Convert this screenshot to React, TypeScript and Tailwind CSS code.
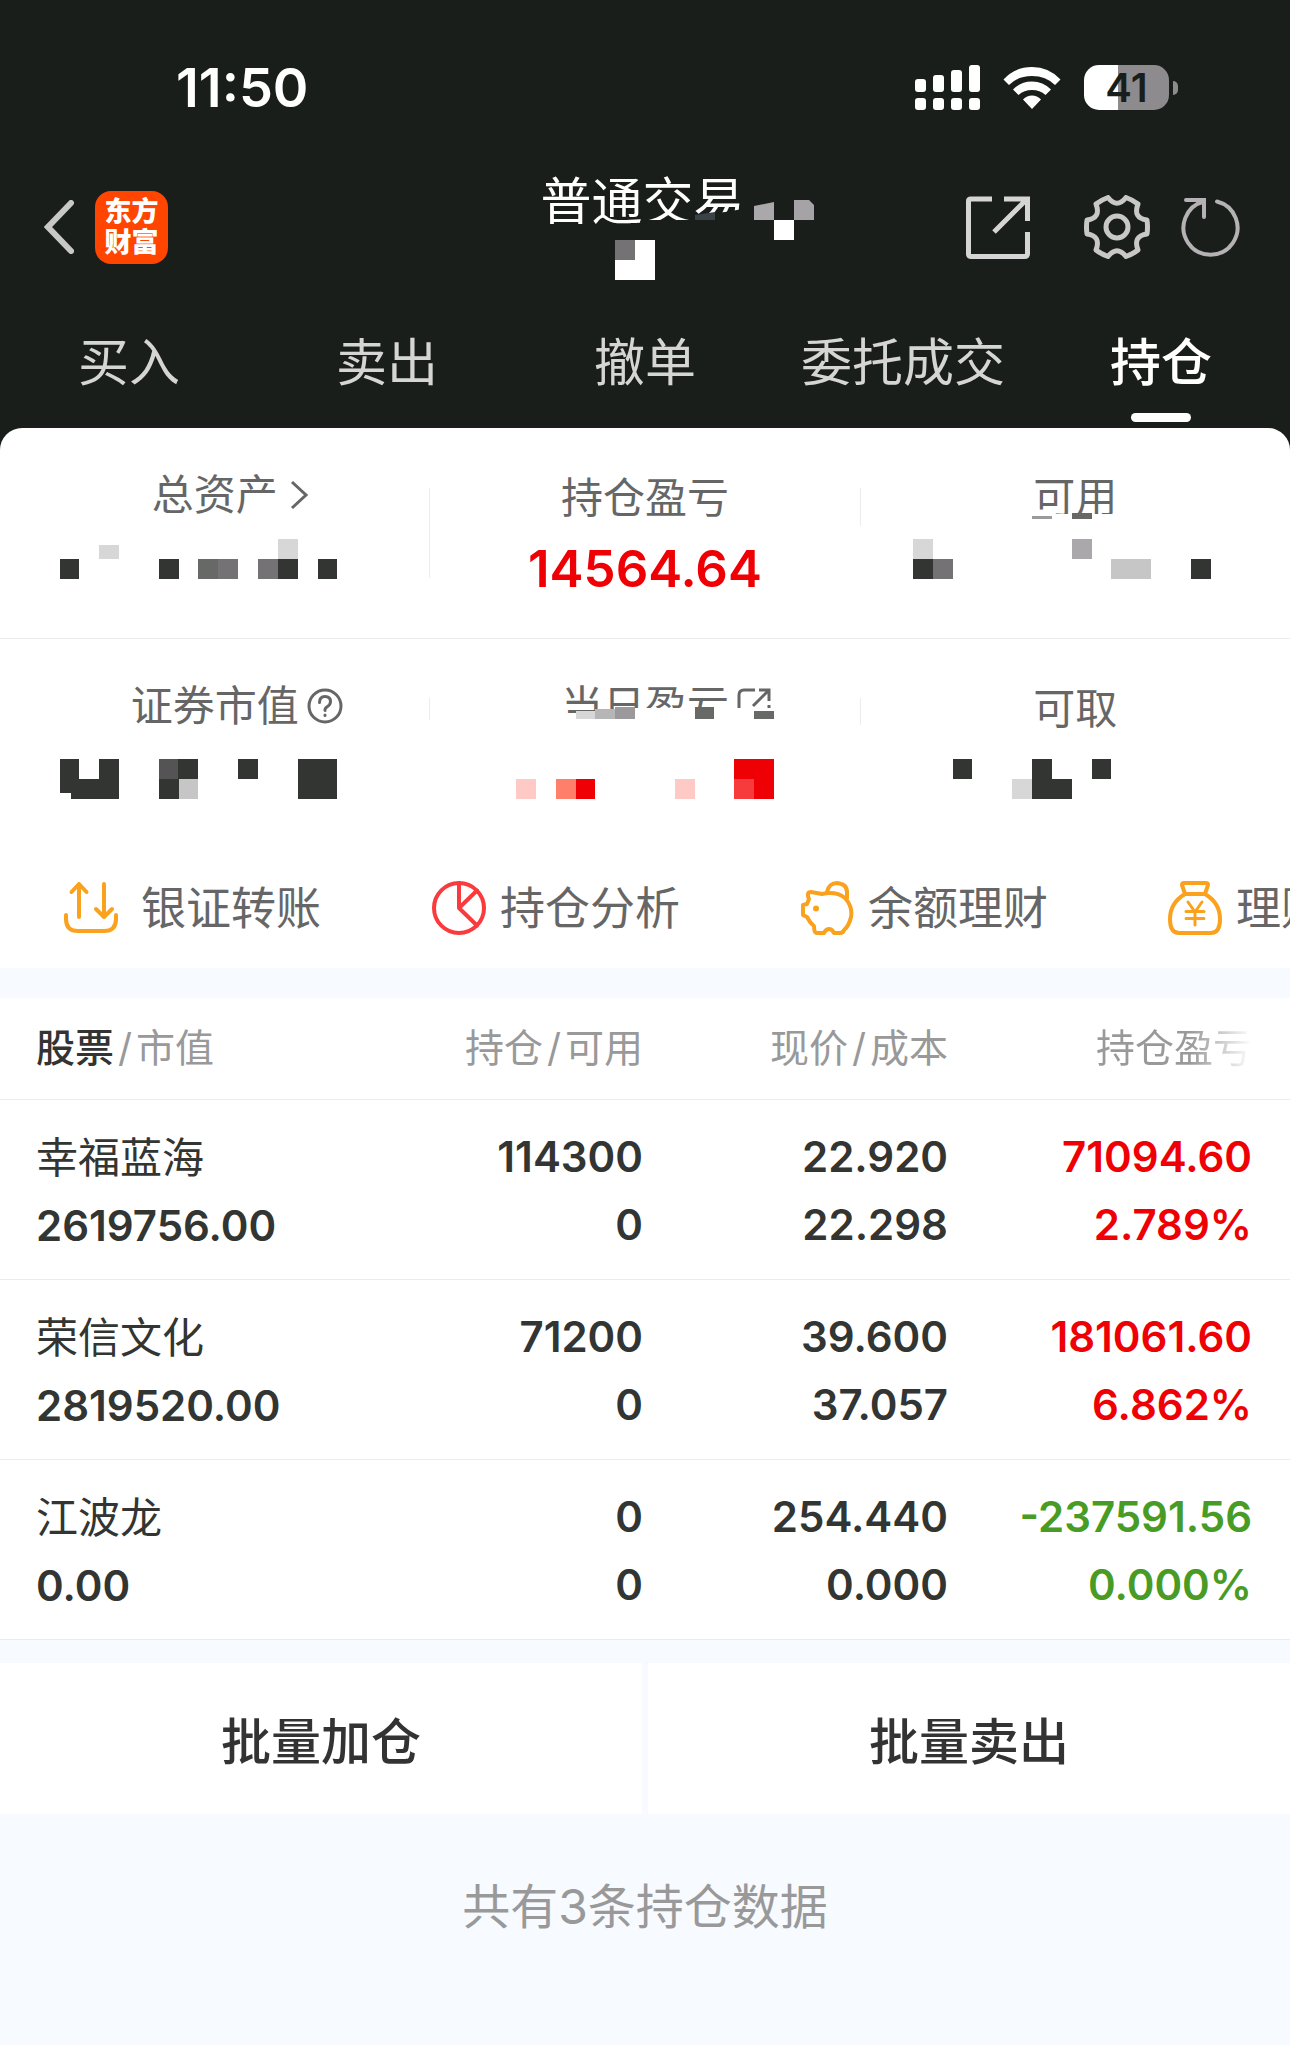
import React from "react";
import clsx from "clsx";

type Block = [x: number, y: number, w: number, h: number, color: string];

const DARK = "#323532";
const MID = "#666966";
const GREY = "#757276";
const LIGHT = "#d7d7d7";
const RED = "#ee0005";

const tabs = ["买入", "卖出", "撤单", "委托成交", "持仓"];

const holdings = [
  {
    name: "幸福蓝海",
    value: "2619756.00",
    amount: "114300",
    available: "0",
    price: "22.920",
    cost: "22.298",
    profit: "71094.60",
    rate: "2.789%",
    up: true,
  },
  {
    name: "荣信文化",
    value: "2819520.00",
    amount: "71200",
    available: "0",
    price: "39.600",
    cost: "37.057",
    profit: "181061.60",
    rate: "6.862%",
    up: true,
  },
  {
    name: "江波龙",
    value: "0.00",
    amount: "0",
    available: "0",
    price: "254.440",
    cost: "0.000",
    profit: "-237591.56",
    rate: "0.000%",
    up: false,
  },
];

// Pixel blocks that hide private values
const Mosaic = ({
  blocks,
  cover,
}: {
  blocks: Block[];
  cover?: string;
}) => (
  <svg
    aria-hidden="true"
    width="430"
    height="200"
    viewBox="0 0 430 200"
    shapeRendering="crispEdges"
    className="absolute top-0 left-1/2 -translate-x-1/2"
  >
    {cover && <polygon points={cover} fill="#fff" />}
    {blocks.map(([x, y, w, h, color], i) => (
      <rect key={i} x={x} y={y} width={w} height={h} fill={color} />
    ))}
  </svg>
);

const Stat = ({
  label,
  value,
  icon,
  blocks,
  cover,
}: {
  label: string;
  value?: string;
  icon?: React.ReactNode;
  blocks?: Block[];
  cover?: string;
}) => (
  <div className="relative flex flex-1 flex-col items-center">
    <div
      className={clsx(
        "relative text-[42px] leading-[60px] text-[#666]",
        icon ? "pt-[37px]" : "pt-10"
      )}
    >
      {label}
      {icon}
    </div>
    {value && (
      <div className="mt-2 text-[51px] leading-[66px] font-semibold text-[#ee0005]">
        {value}
      </div>
    )}
    {blocks && <Mosaic blocks={blocks} cover={cover} />}
  </div>
);

const StatusBar = () => (
  <div className="flex h-[175px] items-center justify-between pr-[112px] pl-[176px]">
    <span className="text-[54px] leading-none font-semibold text-white">
      11:50
    </span>
    <div className="flex items-center gap-[23px]">
      <svg width="65" height="46" viewBox="0 0 65 46" fill="#fff">
        <rect x="0" y="14" width="11" height="13" rx="3" />
        <rect x="18" y="10" width="11" height="17" rx="3" />
        <rect x="36" y="5" width="11" height="22" rx="3" />
        <rect x="54" y="0" width="11" height="27" rx="3" />
        <rect x="0" y="33" width="11" height="12" rx="3" />
        <rect x="18" y="33" width="11" height="12" rx="3" />
        <rect x="36" y="33" width="11" height="12" rx="3" />
        <rect x="54" y="33" width="11" height="12" rx="3" />
      </svg>
      <svg width="58" height="43" viewBox="0 0 58 43" fill="#fff">
        <path d="M0.500 13.500Q12 1 29 1t28.500 12.500L52 19Q43 10 29 10T6 19Z" />
        <path d="M10 23.500Q18 15.500 29 15.500t19 8L42.500 29Q37 24 29 24t-13.500 5Z" />
        <path d="M29 43 20 33.500Q24 29.500 29 29.500t9 4Z" />
      </svg>
      <div className="flex items-center gap-1">
        <div className="flex h-[45px] w-[85px] items-center justify-center rounded-[15px] bg-linear-to-r from-white from-40% to-[#8e8b8e] to-40% text-[40px] font-semibold text-[#1a1e1b]">
          41
        </div>
        <span className="h-[14px] w-[5px] rounded-r-full bg-[#8e8b8e]" />
      </div>
    </div>
  </div>
);

const NavBar = () => (
  <div className="flex h-[104px] items-center pr-[49px] pl-[44px]">
    <div className="flex flex-1 items-center gap-[21px]">
      <button aria-label="返回">
        <svg width="30" height="54" viewBox="0 0 30 54" fill="none">
          <path
            d="M27 3 4 27l23 24"
            stroke="#c8c8c8"
            strokeWidth="6"
            strokeLinecap="round"
          />
        </svg>
      </button>
      <a
        href="#home"
        className="flex h-[73px] w-[73px] flex-col items-center justify-center rounded-[16px] bg-[#ff4500] text-[27px] leading-[31px] font-black text-white"
      >
        <span>东方</span>
        <span>财富</span>
      </a>
    </div>
    <h1 className="relative self-start text-[51px] leading-[54px] text-white">
      普通交易
      <svg
        aria-hidden="true"
        width="290"
        height="110"
        viewBox="-2 0 290 110"
        className="absolute top-0 left-0"
      >
        <path d="M100 45h52v-5l30-3 24-4v27H100Z" fill="#1a1e1b" />
        <path d="M152 40l20-3v8h-20Z" fill="#3a4245" />
        <path d="M211 31l20-4v18h-20Z" fill="#aaa8ab" />
        <path d="M251 25h15l5 5v15h-20Z" fill="#a5a3a6" />
        <path d="M231 45h20v20h-20ZM72 65h40v40H72Z" fill="#fff" />
        <path d="M72 65h20v20H72Z" fill="#757276" />
      </svg>
    </h1>
    <div className="flex flex-1 items-center justify-end">
      <button aria-label="分享" className="mr-[54px]">
        <svg
          width="64"
          height="63"
          viewBox="0 0 64 63"
          fill="none"
          stroke="#d5d5d5"
          strokeWidth="5"
        >
          <path d="M26 3H5Q2.500 3 2.500 5v53q0 2.500 3 2.500h53q3 0 3-3V36M38 3h23.500v22M61 3 28 36" />
        </svg>
      </button>
      <button aria-label="设置" className="mr-[31px]">
        <svg
          width="66"
          height="64"
          viewBox="0 0 66 64"
          fill="none"
          stroke="#c8c8c8"
          strokeWidth="5"
          strokeLinejoin="round"
        >
          <path d="M63 25Q64 32 63 39Q48.600 41 54 55Q49 59 42 61.500Q33 50 24 61.500Q17 59 12 55Q17.400 41 3 39Q2 32 3 25Q17.400 23 12 9Q17 5 24 2.500Q33 14 42 2.500Q49 5 54 9Q48.600 23 63 25Z" />
          <circle cx="33" cy="32" r="11" />
        </svg>
      </button>
      <button aria-label="刷新">
        <svg
          width="60"
          height="60"
          viewBox="0 0 60 60"
          fill="none"
          stroke="#b4b2b4"
          strokeWidth="4"
          strokeLinecap="round"
        >
          <path d="M36 4.500a27 27 0 1 1-13 0M5 3h18v17" />
        </svg>
      </button>
    </div>
  </div>
);

const Tabs = () => (
  <nav className="grid grid-cols-5">
    {tabs.map((tab) => {
      const active = tab === "持仓";
      return (
        <button
          key={tab}
          className={clsx(
            "flex h-[149px] flex-col items-center pt-[54px] text-[51px] leading-[60px]",
            active ? "font-medium text-white" : "text-[#d5d5d5]"
          )}
        >
          {tab}
          {active && (
            <span className="mt-5 h-[9px] w-[60px] rounded-full bg-white" />
          )}
        </button>
      );
    })}
  </nav>
);

const Summary = () => (
  <section>
    <div className="flex h-[211px] border-b border-[#ececec]">
      <Stat
        label="总资产"
        icon={
          <svg
            width="20"
            height="30"
            viewBox="0 0 20 30"
            fill="none"
            stroke="#666"
            strokeWidth="3"
            className="absolute top-[52px] left-full ml-3"
          >
            <path d="m2 2 14 13L2 28" />
          </svg>
        }
        blocks={[
          [60, 131, 19, 20, DARK],
          [99, 117, 20, 14, LIGHT],
          [159, 131, 20, 20, DARK],
          [198, 131, 20, 20, MID],
          [218, 131, 20, 20, GREY],
          [258, 131, 20, 20, GREY],
          [278, 111, 20, 20, LIGHT],
          [278, 131, 20, 20, DARK],
          [318, 131, 19, 20, DARK],
        ]}
      />
      <span className="mt-[60px] h-[90px] w-px bg-[#ececec]" />
      <Stat label="持仓盈亏" value="14564.64" />
      <span className="mt-[60px] h-[38px] w-px bg-[#ececec]" />
      <Stat
        label="可用"
        cover="160,86 260,86 260,106 160,106"
        blocks={[
          [172, 88, 20, 3, "#9c9a9c"],
          [212, 85, 20, 6, MID],
          [53, 111, 20, 20, LIGHT],
          [53, 131, 20, 20, DARK],
          [73, 131, 20, 20, GREY],
          [212, 111, 20, 20, "#aaa8ab"],
          [251, 131, 40, 20, "#c6c6c6"],
          [331, 131, 20, 20, DARK],
        ]}
      />
    </div>
    <div className="flex h-[209px]">
      <Stat
        label="证券市值"
        icon={
          <svg
            width="36"
            height="36"
            viewBox="0 0 36 36"
            fill="none"
            stroke="#666"
            strokeWidth="3"
            strokeLinecap="round"
            className="absolute top-[49px] left-full ml-2"
          >
            <circle cx="18" cy="18" r="16" />
            <path d="M12.500 14.500q0-6 5.500-6t5.500 5q0 3-3 5t-2.500 4M18 27v.5" />
          </svg>
        }
        blocks={[
          [60, 120, 19, 34, DARK],
          [71, 140, 28, 20, DARK],
          [99, 120, 20, 40, DARK],
          [159, 120, 20, 20, "#545454"],
          [178, 120, 20, 20, DARK],
          [159, 140, 20, 20, DARK],
          [179, 140, 19, 20, "#c6c6c6"],
          [238, 120, 20, 20, DARK],
          [298, 120, 39, 40, DARK],
        ]}
      />
      <span className="mt-[59px] h-[22px] w-px bg-[#ececec]" />
      <Stat
        label="当日盈亏"
        icon={
          <svg
            width="34"
            height="34"
            viewBox="0 0 34 34"
            fill="none"
            stroke="#666"
            strokeWidth="3"
            className="absolute top-[49px] left-full ml-2"
          >
            <path d="M18 2H7Q2 2 2 7v25h30V17M22 2h10v11M32 2 16 18" />
          </svg>
        }
        cover="120,74 155,74 205,69 350,69 350,100 120,100"
        blocks={[
          [146, 72, 20, 8, LIGHT],
          [165, 70, 20, 10, "#b6b6b6"],
          [185, 68, 20, 12, "#9c999c"],
          [265, 68, 19, 12, MID],
          [324, 72, 20, 8, MID],
          [86, 140, 20, 20, "#ffc9c6"],
          [126, 140, 20, 20, "#ff7f6b"],
          [146, 140, 19, 20, RED],
          [245, 140, 20, 20, "#ffc9c6"],
          [304, 120, 40, 40, RED],
          [304, 140, 20, 20, "#f73a3b"],
        ]}
      />
      <span className="mt-[59px] h-[27px] w-px bg-[#ececec]" />
      <Stat
        label="可取"
        blocks={[
          [93, 120, 19, 20, DARK],
          [152, 140, 20, 20, LIGHT],
          [172, 120, 20, 40, DARK],
          [192, 140, 20, 20, DARK],
          [232, 120, 19, 20, DARK],
        ]}
      />
    </div>
  </section>
);

const iconProps = {
  width: 54,
  height: 54,
  viewBox: "0 0 54 54",
  fill: "none",
  strokeWidth: 4,
  strokeLinecap: "round" as const,
  strokeLinejoin: "round" as const,
};

const TransferIcon = () => (
  <svg {...iconProps} stroke="#faa21e">
    <path d="M15 36V3M7.500 11 15 3l7.500 8M40 3v33M32 28l8 8 8-8M2 34v4q0 12 12 12h26q12 0 12-12v-4" />
  </svg>
);

const PieIcon = () => (
  <svg {...iconProps} stroke="#fa3a3c">
    <circle cx="27" cy="27" r="25" />
    <path d="M27 2v25L45 9.500M27 27l18 17.500" />
  </svg>
);

const PiggyIcon = () => (
  <svg {...iconProps} stroke="#faa21e">
    <path d="M9 18Q6 11 11 11l11 2q14-3 23 4 8 9 6 19-2 9-7 13-1 3-4 3h-6q-2-4-5-4t-5 4h-7q-3 0-3-7-4-3-7-9l-4-2V24l4-1Z" />
    <path d="M27 11Q29 2 37 2q10 1 10 9v6" />
    <circle cx="16" cy="27.500" r="3" fill="#faa21e" stroke="none" />
  </svg>
);

const MoneyBagIcon = () => (
  <svg {...iconProps} stroke="#faa21e">
    <path d="M17 13 14 4q0-2 2-2h22q2 0 2 2l-3 9ZM17 13Q2 22 2 38q0 14 9 14h32q9 0 9-14 0-16-15-25" />
    <path d="m20 21 7 10 7-10M18 30.500h18M18 37.500h18M27 31v13" strokeWidth="3" />
  </svg>
);

const actions = [
  { label: "银证转账", icon: <TransferIcon />, gap: "gap-[23px]" },
  { label: "持仓分析", icon: <PieIcon />, gap: "gap-[14px]" },
  { label: "余额理财", icon: <PiggyIcon />, gap: "gap-[14px]" },
  { label: "理财", icon: <MoneyBagIcon />, gap: "gap-[14px]" },
];

const QuickActions = () => (
  <div className="flex h-[120px] overflow-hidden pl-[64px]">
    {actions.map((action) => (
      <button
        key={action.label}
        className={clsx(
          "flex w-[368px] shrink-0 items-center text-[45px] leading-none text-[#666]",
          action.gap
        )}
      >
        {action.icon}
        <span>{action.label}</span>
      </button>
    ))}
  </div>
);

const HoldingsTable = () => (
  <table className="mt-[30px] w-full table-fixed bg-white text-right">
    <thead className="text-[39px] leading-[60px] text-[#999]">
      <tr className="h-[101px] border-b border-[#ececec]">
        <th className="w-[337px] pl-9 text-left font-normal">
          <span className="font-medium text-[#333]">股票</span>
          <span className="px-1">/</span>市值
        </th>
        <th className="w-[306px] font-normal">
          持仓<span className="px-1">/</span>可用
        </th>
        <th className="w-[305px] font-normal">
          现价<span className="px-1">/</span>成本
        </th>
        <th className="pr-[38px] font-normal">
          <span className="bg-linear-to-r from-[#999] from-60% to-white bg-clip-text text-transparent">
            持仓盈亏
          </span>
        </th>
      </tr>
    </thead>
    <tbody className="text-[42px] leading-[68px] font-semibold text-[#323532]">
      {holdings.map((item) => (
        <tr key={item.name} className="h-[180px] border-b border-[#ececec]">
          <td className="pt-1.5 pl-9 text-left">
            <div className="font-normal">{item.name}</div>
            <div>{item.value}</div>
          </td>
          <td className="pt-1">
            <div>{item.amount}</div>
            <div>{item.available}</div>
          </td>
          <td className="pt-1">
            <div>{item.price}</div>
            <div>{item.cost}</div>
          </td>
          <td
            className={clsx(
              "pt-1 pr-[38px]",
              item.up ? "text-[#ee0005]" : "text-[#489c26]"
            )}
          >
            <div>{item.profit}</div>
            <div>{item.rate}</div>
          </td>
        </tr>
      ))}
    </tbody>
  </table>
);

const App = () => {
  return (
    <div className="min-h-screen bg-[#f7faff] font-['Inter','Noto_Sans_CJK_SC',sans-serif]">
      <header className="bg-[#1a1e1b]">
        <StatusBar />
        <NavBar />
        <Tabs />
      </header>

      <div className="bg-[#1a1e1b]">
        <div className="rounded-t-[22px] bg-white">
          <Summary />
          <QuickActions />
        </div>
      </div>

      <HoldingsTable />

      {/* Batch operations */}
      <div className="mt-[23px] grid grid-cols-2 gap-[6px]">
        <button className="h-[151px] bg-white pt-2 text-[50px] font-medium text-[#333]">
          批量加仓
        </button>
        <button className="h-[151px] bg-white pt-2 text-[50px] font-medium text-[#333]">
          批量卖出
        </button>
      </div>

      <p className="py-[61px] text-center text-[48px] leading-[64px] text-[#999]">
        共有3条持仓数据
      </p>
    </div>
  );
};

export default App;
